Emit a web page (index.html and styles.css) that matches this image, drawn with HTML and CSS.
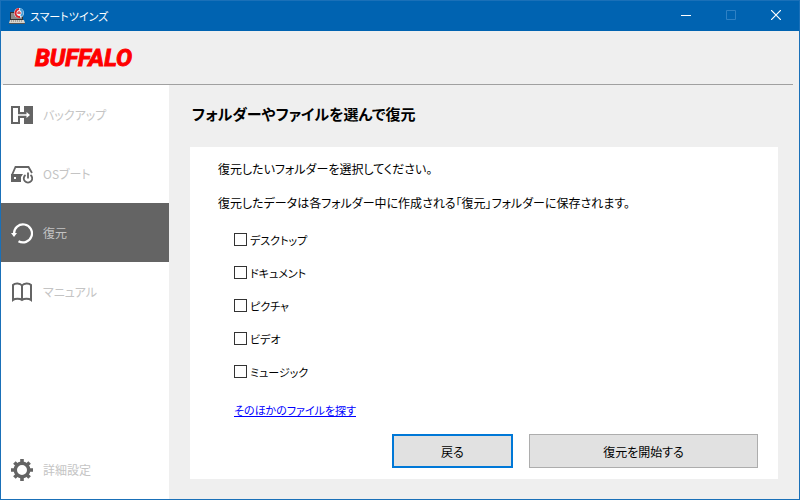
FILE: index.html
```html
<!DOCTYPE html>
<html lang="ja">
<head>
    <meta charset="UTF-8">
    <meta name="viewport" content="width=device-width, initial-scale=1.0">
    <title>スマートツインズ</title>
    <link rel="stylesheet" href="styles.css">
</head>
<body>
    <div class="window">
        <div class="titlebar">
            <svg class="app-icon" viewBox="0 0 16 16" width="16" height="16" aria-hidden="true">
                <path d="M1 4h13v8H1z" fill="#333"/>
                <path d="M2 5h11v6H2z" fill="#8a8a8a"/>
                <path d="M1 12h14l1 3H0z" fill="#d8d4cc"/>
                <path d="M0 15h16v1H0z" fill="#555"/>
                <path d="M2 13h12" stroke="#777" stroke-dasharray="1 1"/>
                <circle cx="10" cy="5" r="5" fill="#e9eef5"/>
                <path d="M10 1a4 4 0 1 0 1 8" fill="none" stroke="#d8232a" stroke-width="2"/>
                <path d="M11 1a4 4 0 0 1 1 7" fill="none" stroke="#4a9fd8" stroke-width="2"/>
                <path d="M8 5h4M10 3v3" stroke="#d8232a"/>
            </svg>
            <span class="window-title">スマートツインズ</span>
            <div class="window-buttons">
                <button type="button" aria-label="最小化">
                    <svg viewBox="0 0 10 10" width="10" height="10"><path d="M0 5.5h10" stroke="#fff"/></svg>
                </button>
                <button type="button" aria-label="最大化" disabled>
                    <svg viewBox="0 0 10 10" width="10" height="10"><path d="M.5.5h9v9h-9z" fill="none" stroke="#2f81c4"/></svg>
                </button>
                <button type="button" aria-label="閉じる">
                    <svg viewBox="0 0 10 10" width="10" height="10"><path d="M0 0l10 10M10 0L0 10" stroke="#fff" stroke-width="1.2"/></svg>
                </button>
            </div>
        </div>

        <header class="header">
            <div class="logo">BUFFALO</div>
        </header>

        <div class="body">
            <nav class="sidebar">
                <a class="nav-item" href="#backup">
                    <svg viewBox="0 0 22 22" width="22" height="22">
                        <path d="M0 2h9v6h4V2h9v18h-9v-6H9v6H0z" fill="#646464"/>
                        <path d="M2 4h5v14H2z" fill="#fff"/>
                        <path d="M7 11h11" stroke="#fff" stroke-width="1.5"/>
                        <path d="M15.5 8l3.5 3-3.5 3z" fill="#fff"/>
                    </svg>
                    <span>バックアップ</span>
                </a>
                <a class="nav-item" href="#osboot">
                    <svg viewBox="0 0 22 22" width="22" height="22">
                        <path d="M1 12L4.5 4h13L21 10" fill="none" stroke="#646464" stroke-width="1.8"/>
                        <path d="M0 11h12l-2 3v5H0z" fill="#646464"/>
                        <path d="M3 14h2v2H3z" fill="#fff"/>
                        <path d="M14.5 12a4.2 4.2 0 1 0 5 0M17 9.5v6" fill="none" stroke="#646464" stroke-width="1.8"/>
                    </svg>
                    <span>OSブート</span>
                </a>
                <a class="nav-item active" href="#restore" aria-current="page">
                    <svg viewBox="0 0 22 22" width="22" height="22">
                        <path d="M3 11.5A9 9 0 1 1 7.5 19.2" fill="none" stroke="#fff" stroke-width="2.2"/>
                        <path d="M0 11h6l-3 4z" fill="#fff"/>
                    </svg>
                    <span>復元</span>
                </a>
                <a class="nav-item" href="#manual">
                    <svg viewBox="0 0 22 22" width="22" height="22">
                        <path d="M11 4.5C9 2 4 2 2 4v15c2-1.6 7-1.6 9 0 2-1.6 7-1.6 9 0V4c-2-2-7-2-9 .5zV19" fill="none" stroke="#646464" stroke-width="2"/>
                    </svg>
                    <span>マニュアル</span>
                </a>
                <a class="nav-item nav-bottom" href="#settings">
                    <svg viewBox="0 0 22 22" width="22" height="22">
                        <circle cx="11" cy="11" r="6.7" fill="none" stroke="#646464" stroke-width="3.4"/>
                        <path d="M11 0v4M11 18v4M0 11h4M18 11h4M3.4 3.4L6 6M16 16l2.6 2.6M3.4 18.6L6 16M16 6l2.6-2.6" stroke="#646464" stroke-width="3.6"/>
                    </svg>
                    <span>詳細設定</span>
                </a>
            </nav>

            <main class="content">
                <h1>フォルダーやファイルを選んで復元</h1>
                <form class="panel">
                    <p>復元したいフォルダーを選択してください。</p>
                    <p>復元したデータは各フォルダー中に作成される「復元」フォルダーに保存されます。</p>
                    <div class="folder-list">
                        <label><input type="checkbox" name="desktop">デスクトップ</label>
                        <label><input type="checkbox" name="documents">ドキュメント</label>
                        <label><input type="checkbox" name="pictures">ピクチャ</label>
                        <label><input type="checkbox" name="videos">ビデオ</label>
                        <label><input type="checkbox" name="music">ミュージック</label>
                        <a class="more-link" href="#files">そのほかのファイルを探す</a>
                    </div>
                    <div class="actions">
                        <button type="button" class="btn btn-back">戻る</button>
                        <button type="button" class="btn btn-start">復元を開始する</button>
                    </div>
                </form>
            </main>
        </div>
    </div>
</body>
</html>
```

FILE: styles.css
```css
* {
    margin: 0;
    padding: 0;
    box-sizing: border-box;
}

body {
    font-family: "Noto Sans CJK JP", sans-serif;
    font-size: 12px;
    font-feature-settings: "palt";
    color: #000;
}

button {
    font: inherit;
    font-feature-settings: inherit;
}

.window {
    display: flex;
    flex-direction: column;
    min-height: 100vh;
    background: #efefef;
    border: 1px solid #1a70b8;
}

/* title bar */
.titlebar {
    display: flex;
    align-items: center;
    height: 30px;
    padding-left: 8px;
    background: #0063b1;
    color: #fff;
}

.window-title {
    margin-left: 5px;
    font-size: 11px;
}

.window-buttons {
    display: flex;
    align-self: stretch;
    margin-left: auto;
    padding-right: 1px;
}

.window-buttons button {
    display: flex;
    align-items: center;
    justify-content: center;
    width: 45px;
    padding-bottom: 2px;
    background: none;
    border: none;
}

/* header */
.header {
    display: flex;
    align-items: center;
    height: 54px;
    margin: 0 6px 0 2px;
    padding-left: 32px;
    border-bottom: 1px solid #a0a0a0;
}

.logo {
    font-family: Roboto, sans-serif;
    font-size: 24px;
    font-weight: bold;
    font-style: italic;
    line-height: 28px;
    color: #f00;
    -webkit-text-stroke: 1px #f00;
}

.body {
    display: flex;
    flex: 1;
}

/* sidebar */
.sidebar {
    display: flex;
    flex-direction: column;
    flex: 0 0 168px;
    background: #fff;
}

.nav-item {
    display: flex;
    align-items: center;
    gap: 10px;
    height: 59px;
    padding-left: 10px;
    color: #c4c4c4;
    text-decoration: none;
}

.nav-item.active {
    background: #646464;
}

.nav-bottom {
    margin-top: auto;
}

/* content */
.content {
    display: flex;
    flex-direction: column;
    flex: 1;
    padding: 14px 21px 20px;
}

h1 {
    margin-left: 2px;
    font-size: 15px;
    font-weight: bold;
    line-height: 30px;
}

.panel {
    display: flex;
    flex-direction: column;
    flex: 1;
    margin-top: 18px;
    padding: 5px 20px 11px 28px;
    background: #fff;
}

.panel p {
    line-height: 34px;
}

.folder-list {
    display: flex;
    flex-direction: column;
    align-items: flex-start;
    margin: 3px 0 0 16px;
    font-size: 11px;
}

.folder-list label {
    display: flex;
    align-items: center;
    gap: 3px;
    height: 33px;
}

.folder-list input {
    appearance: none;
    width: 13px;
    height: 13px;
    background: #fff;
    border: 1px solid #333;
}

.folder-list input:checked {
    background: #333;
    box-shadow: inset 0 0 0 2px #fff;
}

.more-link {
    margin-top: 6px;
    line-height: 32px;
    color: #00f;
}

.actions {
    display: flex;
    justify-content: flex-end;
    gap: 16px;
    margin-top: auto;
}

.btn {
    height: 34px;
    background: #e1e1e1;
    border: 1px solid #adadad;
}

.btn-back {
    width: 121px;
    border: 2px solid #0078d7;
}

.btn-start {
    width: 229px;
}
```
